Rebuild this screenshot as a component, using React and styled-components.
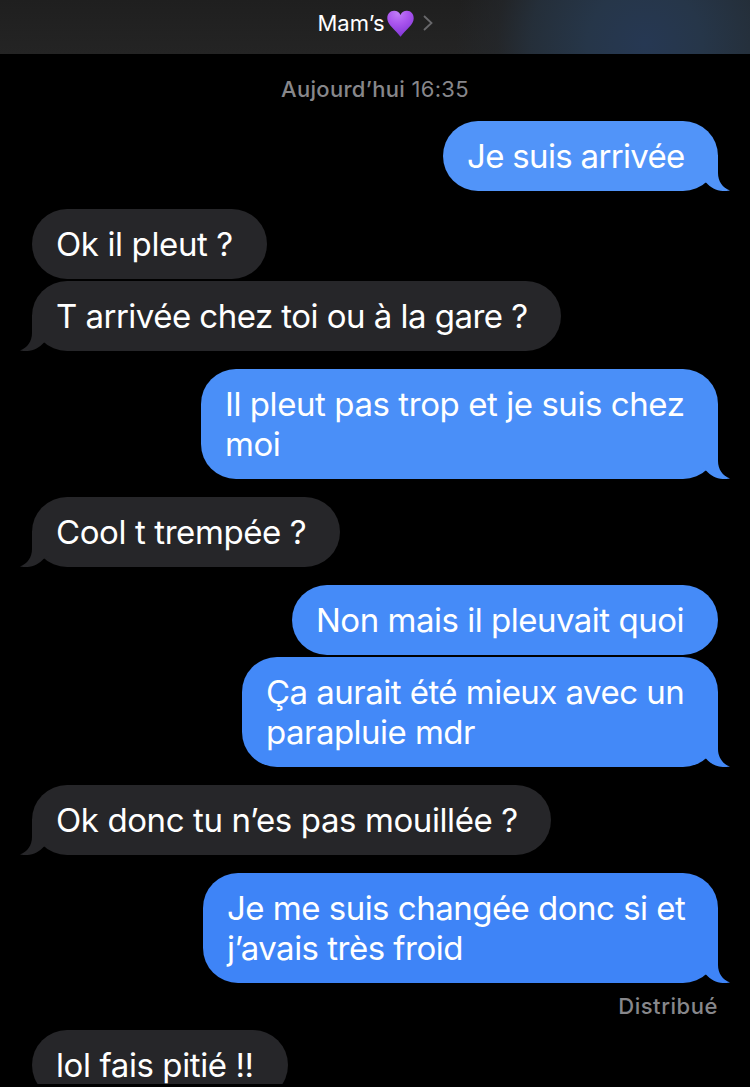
import React from 'react';
import styled, { createGlobalStyle } from 'styled-components';

const GlobalStyle = createGlobalStyle`
  * {
    box-sizing: border-box;
  }

  body {
    margin: 0;
    background: #000;
    overflow: hidden;
  }
`;

const Screen = styled.div`
  display: flex;
  flex-direction: column;
  width: 750px;
  height: 1087px;
  padding-bottom: 3px;
  overflow: hidden;
  background: #000;
  color: #fff;
  font-family: Inter, "Liberation Sans", sans-serif;
`;

const Header = styled.header`
  display: flex;
  flex: none;
  justify-content: center;
  height: 54px;
  padding-top: 9px;
  background:
    radial-gradient(ellipse 190px 190px at 645px 44px, #263853 0%, #263649 30%, rgba(37, 48, 60, .9) 60%, rgba(36, 40, 45, .6) 78%, rgba(34, 34, 35, 0) 100%),
    linear-gradient(#1f1f1f, #242424);
`;

const Contact = styled.div`
  display: flex;
  align-items: center;
  height: 28px;
  font-size: 22px;
  letter-spacing: .1px;

  .heart {
    margin-left: 2px;
  }

  .chevron {
    margin-left: 9px;
  }
`;

const Thread = styled.main`
  display: flex;
  flex: 1;
  flex-direction: column;
  min-height: 0;
  padding: 0 32px;
  overflow: hidden;
`;

const Stamp = styled.div`
  flex: none;
  height: 67px;
  padding-top: 21px;
  color: #87878b;
  font-size: 22px;
  line-height: 28px;
  letter-spacing: .3px;
  text-align: center;

  b {
    font-weight: 500;
  }
`;

const Bubble = styled.div`
  position: relative;
  flex: none;
  align-self: ${p => (p.$sent ? 'flex-end' : 'flex-start')};
  width: ${p => p.$width}px;
  margin-bottom: ${p => (p.$tail ? 18 : 2)}px;
  padding: 15px 0 15px 24px;
  border-radius: 35px;
  background: ${p => p.$tone};
  font-size: 33px;
  line-height: 40px;
  letter-spacing: ${p => p.$spacing}px;
  white-space: pre;
`;

const Tail = styled.svg`
  position: absolute;
  bottom: 0;
  ${p => (p.$sent ? 'right: -12px;' : 'left: -12px; transform: scaleX(-1);')}
`;

const Receipt = styled.div`
  flex: none;
  height: 47px;
  margin-top: -18px;
  padding-top: 9px;
  color: #87878b;
  font-size: 22px;
  font-weight: 500;
  line-height: 28px;
  letter-spacing: .55px;
  text-align: right;
`;

const Heart = () => (
  <svg className="heart" width="27" height="27" viewBox="0 0 27 27">
    <defs>
      <radialGradient id="heart" cx=".4" cy=".1" r=".9">
        <stop offset="0" stopColor="#c07df8" />
        <stop offset=".45" stopColor="#aa55ee" />
        <stop offset="1" stopColor="#8136d6" />
      </radialGradient>
    </defs>
    <path
      d="M13.500 5C12.300 2 9.800.7 7 .8 3 .9.3 4 .3 8.500c0 6.500 8 11 13.200 18.300C18.700 19.500 26.700 15 26.700 8.500c0-4.500-2.700-7.600-6.700-7.700-2.800-.1-5.300 1.200-6.500 4.200z"
      fill="url(#heart)"
    />
  </svg>
);

const Chevron = () => (
  <svg className="chevron" width="10" height="16" viewBox="0 0 10 16">
    <path d="M1 1l7.500 7L1 15" fill="none" stroke="#68686b" strokeWidth="1.800" />
  </svg>
);

const GREY = '#262629';

const Message = ({ sent, tail, tone = GREY, width, spacing = -.43, children }) => (
  <Bubble $sent={sent} $tail={tail} $tone={tone} $width={width} $spacing={spacing}>
    {children}
    {tail && (
      <Tail $sent={sent} width="30" height="36" viewBox="0 0 30 36">
        <path d="M0 0H18V18C18 26 22.500 33 30 35.500C20.500 37.500 11.500 34 6.500 28L0 24Z" fill={tone} />
      </Tail>
    )}
  </Bubble>
);

const App = () => {
  return (
    <Screen>
      <GlobalStyle />
      <Header>
        <Contact>
          Mam’s
          <Heart />
          <Chevron />
        </Contact>
      </Header>
      <Thread>
        <Stamp><b>Aujourd’hui</b> 16:35</Stamp>
        <Message sent tail tone="#5194f9" width={275} spacing={-.68}>Je suis arrivée</Message>
        <Message width={235} spacing={-.38}>Ok il pleut ?</Message>
        <Message tail width={529} spacing={-.53}>T arrivée chez toi ou à la gare ?</Message>
        <Message sent tail tone="#4a8ff8" width={517} spacing={-.43}>{'Il pleut pas trop et je suis chez\nmoi'}</Message>
        <Message tail width={308} spacing={-.4}>Cool t trempée ?</Message>
        <Message sent tone="#458bf8" width={426} spacing={-.49}>Non mais il pleuvait quoi</Message>
        <Message sent tail tone="#4389f8" width={476} spacing={-.53}>{'Ça aurait été mieux avec un\nparapluie mdr'}</Message>
        <Message tail width={519} spacing={-.4}>Ok donc tu n’es pas mouillée ?</Message>
        <Message sent tail tone="#3e84f7" width={515} spacing={-.51}>{'Je me suis changée donc si et\nj’avais très froid'}</Message>
        <Receipt>Distribué</Receipt>
        <Message width={256} spacing={-.4}>lol fais pitié !!</Message>
      </Thread>
    </Screen>
  );
};

export default App;
